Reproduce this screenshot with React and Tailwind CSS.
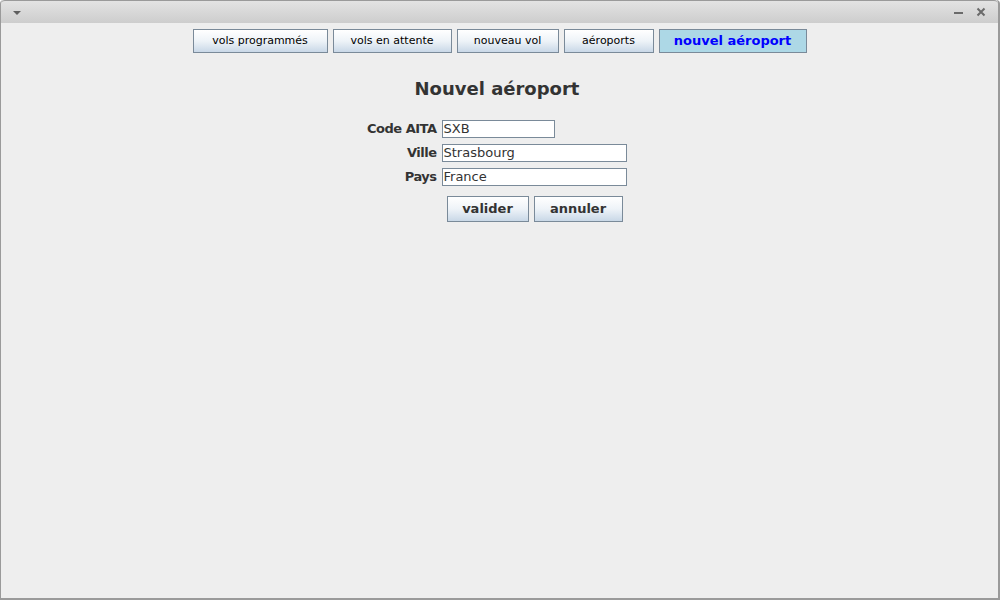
import React from 'react';

const font = { fontFamily: '"DejaVu Sans", "Liberation Sans", sans-serif' };

const tabs = [
  { label: 'vols programmés', w: 'w-[135px]' },
  { label: 'vols en attente', w: 'w-[119px]' },
  { label: 'nouveau vol', w: 'w-[102px]' },
  { label: 'aéroports', w: 'w-[90px]' },
];

function TitleBar() {
  return (
    <div className="h-[23px] shrink-0 flex items-center justify-between px-[10px] bg-gradient-to-b from-[#e3e3e3] to-[#cdcdcd] border-t border-[#9a9a9a] rounded-t-[4px]">
      <svg width="10" height="6" viewBox="0 0 10 6" className="ml-[1px] mt-[1px]">
        <polygon points="1,1 9,1 5,5" fill="#5f5f5f" />
      </svg>
      <div className="flex items-center gap-[13px] mr-[2px]">
        <div className="w-[9px] h-[2px] bg-[#6a6a6a] mt-[1px]" />
        <svg width="10" height="10" viewBox="0 0 10 10">
          <path d="M1.5 1.5 L8.5 8.5 M8.5 1.5 L1.5 8.5" stroke="#6a6a6a" strokeWidth="2" />
        </svg>
      </div>
    </div>
  );
}

function NavButton({ label, w }) {
  return (
    <button className={`${w} h-[24px] border border-[#7a8a99] bg-gradient-to-b from-white via-[#eef3f8] to-[#c9d8e7] text-[11px] text-black`}>
      {label}
    </button>
  );
}

function Field({ label, value, w }) {
  return (
    <>
      <div className="h-[18px] flex items-center justify-end whitespace-nowrap text-[13px] font-bold tracking-[-0.5px] text-[#333]">{label}</div>
      <div className={`${w} h-[18px] border border-[#7a8a99] bg-white text-[13px] text-[#333] pl-[1px] leading-[16px]`}>
        {value}
      </div>
    </>
  );
}

export default function App() {
  return (
    <div className="w-[1000px] h-[600px] flex flex-col bg-[#eeeeee] border-l border-r-2 border-b-2 border-[#9a9a9a] rounded-t-[4px] overflow-hidden" style={font}>
      <TitleBar />
      <div className="flex flex-col items-center pt-[6px]">
        <div className="flex gap-[5px]">
          {tabs.map((t) => (
            <NavButton key={t.label} {...t} />
          ))}
          <button className="w-[148px] h-[24px] border border-[#7a8a99] bg-[#add8e6] text-[13px] font-bold text-[#0000ff]">
            nouvel aéroport
          </button>
        </div>

        <div className="mr-[5px] flex flex-col items-center">
          <h1 className="mt-[25px] text-[18px] font-bold text-[#333] leading-[22px]">Nouvel aéroport</h1>
          <div className="mt-[20px] grid grid-cols-[69px_185px] gap-x-[5px] gap-y-[6px]">
            <Field label="Code AITA" value="SXB" w="w-[113px]" />
            <Field label="Ville" value="Strasbourg" w="w-[185px]" />
            <Field label="Pays" value="France" w="w-[185px]" />
            <div />
            <div className="flex justify-center gap-[5px] mt-[4px] pl-[1px]">
              <button className="w-[82px] h-[26px] border border-[#7a8a99] bg-gradient-to-b from-white via-[#eef3f8] to-[#c9d8e7] text-[13px] font-bold text-[#333]">
                valider
              </button>
              <button className="w-[89px] h-[26px] border border-[#7a8a99] bg-gradient-to-b from-white via-[#eef3f8] to-[#c9d8e7] text-[13px] font-bold text-[#333]">
                annuler
              </button>
            </div>
          </div>
        </div>
      </div>
    </div>
  );
}
